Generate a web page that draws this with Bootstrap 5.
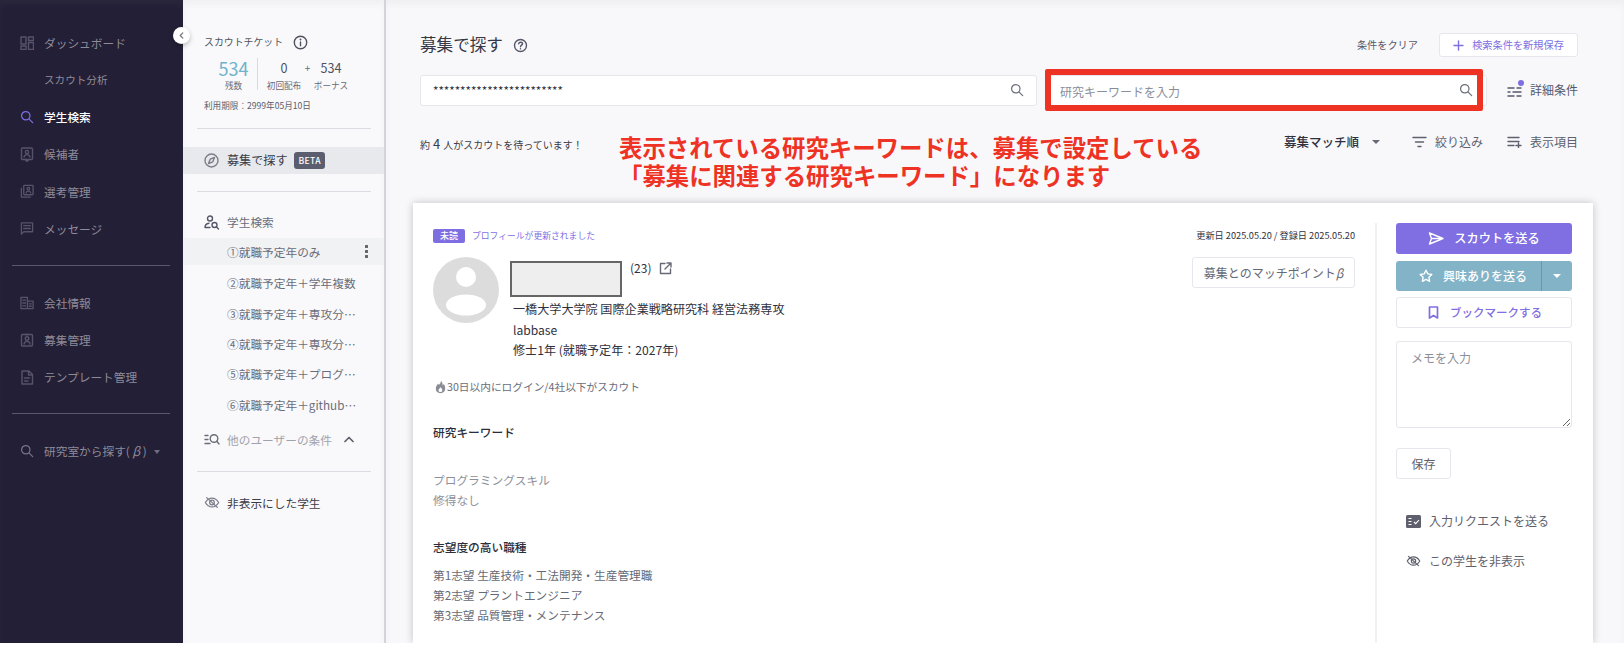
<!DOCTYPE html>
<html lang="ja">
<head>
<meta charset="utf-8">
<title>募集で探す</title>
<link href="https://cdn.jsdelivr.net/npm/bootstrap@5.3.0/dist/css/bootstrap.min.css" rel="stylesheet">
<style>
html,body{height:650px;overflow:hidden;background:#fff}
body{font-family:"Noto Sans CJK JP","Noto Sans",sans-serif;font-size:12.6px;color:#2b2d3a}
svg{display:block;flex:none}
.ic{fill:none;stroke:currentColor;stroke-width:1.4;stroke-linecap:round;stroke-linejoin:round}
.shell{height:643px;position:relative;overflow:hidden}
.rail{width:183px;background:#231f36;padding-top:24px;flex:none;box-shadow:inset 0 5px 6px rgba(255,255,255,.03)}
.rail-item{height:37.2px;padding-left:20px;gap:10px;color:#8e8b99;font-size:11.7px}
.rail-item svg{color:#57536b}
.rail-item.on{color:#fff;font-weight:500}
.rail-item.on svg{color:#7d6fe2}
.rail-item.sub{padding-left:44px;font-size:10.6px}
.rail-item.lab svg{color:#77748a}
.rail-item.lab i{margin:0 2.5px;font-size:12.5px}
.rail-caret{width:0;height:0;border:3.5px solid transparent;border-top:4px solid #6f6c7f;margin:4px 0 0 -3px}
.rail-rule{height:1px;background:#5b586b;margin:18px 13px 18px 12px;opacity:1}
.rail-rule.b{margin-bottom:19px;margin-top:17px}
.side{width:203px;flex:none;background:#f9f9fb;border-right:2px solid #d3d4d9;padding-top:32px;box-shadow:inset 0 5px 6px rgba(0,0,0,.035)}
.collapse-dot{position:absolute;left:173px;top:27px;width:17px;height:17px;border-radius:50%;background:#fff;box-shadow:0 2px 5px rgba(0,0,0,.25);color:#777;z-index:3}
.tk-head{height:20px;padding-left:21px;gap:10px;font-size:9.9px;color:#50535f}
.tk-row{height:32px;margin:6px 0 0 0;padding-left:29px}
.tk-cell{text-align:center;line-height:1}
.tk-num{font-size:12.6px;line-height:20px;color:#50535f;height:20px}
.tk-big{font-size:18px;line-height:20px;color:#6fb2c9;height:20px}
.tk-lab{font-size:8.6px;color:#666a76;margin-top:3px}
.tk-one{width:43px}
.tk-two{width:36px}
.tk-plus{width:11px;font-size:10px;line-height:20px;color:#666a76}
.tk-sep{width:1px;background:#d9dae0;height:32px;margin:0 8px 0 2px}
.tk-date{font-size:8.6px;color:#5b5e6a;padding-left:21px;margin-top:7px;height:16px;line-height:16px}
.side-rule{height:1px;background:#dcdde2;margin:0 13px 0 14px}
.side-rule.r1{margin-top:15px}
.side-rule.r2{margin-top:22px}
.side-active{height:27px;background:#e8e9ec;padding-left:21px;gap:8px;margin:18px 0 17px;font-size:12.1px;color:#3a3c49}
.side-active svg{color:#7b7e8a}
.beta{background:#5a5e6f;font-size:8.6px;font-weight:500;letter-spacing:.3px;padding:0 4px;height:17px;line-height:17px;border-radius:3px;margin-left:-1px}
.side-title{height:20px;padding-left:21px;gap:7px;margin-top:20px;font-size:11.7px;color:#6a6d79}
.side-title svg{color:#55586a}
.saved{height:30.3px;padding:0 6px 0 44px;font-size:11.7px;color:#6a6d79}
.saved span{white-space:nowrap;overflow:hidden;text-overflow:ellipsis}
.saved.on{height:27px;background:#f1f2f4;margin:6px 0 3px}
.kebab{width:3px;height:13px;margin-left:auto;margin-right:10px;flex:none;background:radial-gradient(circle at 1.5px 1.5px,#666 1.4px,transparent 1.6px) 0 0/3px 5px repeat-y}
.other{height:20px;padding-left:21px;gap:7px;margin-top:10px;font-size:11.7px;color:#a0a2ab}
.other svg{color:#6a6d79}
.other .up{color:#5e616d;margin-left:5px;stroke-width:1.7}
.hidden-row{height:20px;padding-left:21px;gap:7px;margin-top:20px;font-size:11.7px;color:#3a3c49}
.hidden-row svg{color:#7b7e8a}
.main{flex:1;background:#f8f8fb;padding:33px 46px 0 34px;min-width:0;box-shadow:inset 0 5px 6px rgba(0,0,0,.035)}
.title-row{height:24px}
.page-title{font-size:16.6px;color:#363845;font-weight:400;margin:0 10px 0 0}
.help{color:#55586a}
.clear-link{font-size:10.2px;color:#55586a;margin-right:21px}
.save-btn{height:24px;width:139px;padding:0;background:#fff;border:1px solid #e6e7ec;border-radius:3px;font-size:10.2px;color:#7d6fe2;gap:8px}
.search-row{height:31px;margin-top:17.5px;gap:8px}
.sbox{position:relative;height:31px;background:#fff;border:1px solid #e6e7ec;border-radius:3px}
.sbox.a{width:617px;flex:none}
.sbox.b{width:442px;flex:none}
.sbox .form-control{height:29px;border:0;background:transparent;box-shadow:none;font-size:11.6px;color:#2b2d3a;padding:0 0 0 12px}
.sbox.b .form-control{padding:2px 0 0 14px;font-size:12px}
.sbox .form-control::placeholder{color:#8b8e99}
.sbox svg{position:absolute;top:7px;right:12px;color:#6c6f7b;z-index:1}
.sbox.b svg{right:13px}
.red-frame{position:absolute;left:-1px;right:3px;top:-7px;bottom:-6px;border:6px solid #ee3224;border-radius:2px;pointer-events:none}
.more{margin-left:auto;gap:8px;font-size:12px;color:#55586a;position:relative}
.more svg{margin-top:3px}
.more i{position:absolute;left:11px;top:5px;width:6px;height:6px;border-radius:50%;background:#7d6fe2}
.tool-row{height:24px;margin-top:24.5px;position:relative}
.count{font-size:10px;color:#3a3c49;margin-top:4px}
.count b{font-size:13px;font-weight:400;margin:0 3px}
.note{position:absolute;left:199px;top:3px;font-size:23.4px;line-height:28px;font-weight:700;color:#ee3224;white-space:nowrap;margin:0}
.tool{gap:8px;font-size:12px;color:#5e616d}
.sort{color:#2f313e;font-size:12.5px;gap:13px;margin-right:32px;margin-left:auto;font-weight:500}
.sort i{width:0;height:0;border:4px solid transparent;border-top:4px solid #666a76;margin-top:4px}
.sheet{margin:49px 0 0 -7px;width:1180px;height:440px;background:#fff;box-shadow:0 0 8px rgba(0,0,0,.22);padding:20px 21px 0 20px;overflow:hidden}
.left-col{width:922px;flex:none;padding-top:6px}
.unread{background:#7d6fe2;font-size:9px;font-weight:500;height:14px;line-height:14px;padding:0 7px;border-radius:2px;margin-right:7px}
.upd{font-size:8.8px;color:#7d6fe2}
.meta{margin-left:auto;font-size:9.2px;color:#2f313e}
.prof{margin-top:14px}
.avatar{margin-right:11px}
.name-mask{width:112px;height:36px;background:#eee;border:2px solid #666;margin-top:4px}
.age{font-size:12px;margin:2px 0 0 8px;height:18px;gap:8px;color:#2f313e}
.age svg{color:#666a76}
.info{line-height:20.5px;padding-left:3px;margin-top:2px;color:#2f313e;font-size:12.1px}
.match{margin-left:auto;width:163px;height:31px;padding:0;background:#fff;border:1px solid #e6e7ec;border-radius:3px;font-size:12px;color:#666a76;white-space:nowrap}
.hot{margin-top:18.5px;height:16px;padding-left:2px;font-size:10.7px;color:#6a6d79}
.kw{font-size:11.7px;font-weight:500;color:#2b2d3a;height:18px;line-height:18px}
.kw.k1{margin-top:27.5px}
.kw.k2{margin-top:28px}
.dim{font-size:11.7px;line-height:20px;color:#8d9099}
.dim.d1{margin-top:29px}
.gray{font-size:11.7px;line-height:20px;color:#666a76}
.gray.g1{margin-top:9px}
.right-col{width:197px;margin-left:20px;border-left:2px solid #f1f1f3;padding-left:19px;flex:none;height:520px}
.b-scout{height:31px;width:176px;padding:0;background:#7f6fe2;border:0;border-radius:3px;color:#fff;font-size:12.2px;font-weight:500;gap:10px}
.b-int{height:30px;width:176px;margin-top:7px;border-radius:3px;overflow:hidden}
.b-int .btn{background:#83b3c7;border:0;border-radius:0;color:#fff;font-size:12px;font-weight:500;padding:0;gap:10px}
.b-int .first{flex:1;border-right:1px solid #6c97aa;padding-left:9px}
.b-int .second{width:30px;flex:none}
.b-int i{width:0;height:0;border:4px solid transparent;border-top:4px solid #fff;margin-top:4px}
.b-book{height:31px;width:176px;margin-top:6px;padding:0 0 0 2px;background:#fff;border:1px solid #e6e7ec;border-radius:3px;color:#7f6fe2;font-size:11.5px;font-weight:500;gap:11px}
.memo{width:176px;height:87px;margin-top:13px;border:1px solid #e6e7ec;border-radius:3px;font-size:12px;padding:7px 14px;box-shadow:none}
.memo::placeholder{color:#8d9099}
.b-save{width:55px;height:31px;margin-top:20px;padding:0;background:#fff;border:1px solid #e6e7ec;border-radius:3px;font-size:12px;color:#5e616d}
.act{height:20px;padding-left:10px;gap:8px;font-size:12px;color:#5e616d}
.act svg{color:#5e616d}
.act.a1{margin-top:32px}
.act.a2{margin-top:20px}
.flame{color:#8a8d96;margin-right:1px}
</style>
</head>
<body>
<svg width="0" height="0" style="position:absolute">
  <symbol id="i-search" viewBox="0 0 16 16"><circle cx="6.6" cy="6.6" r="4.8"/><path d="M10.2 10.2 14.5 14.5"/></symbol>
  <symbol id="i-eyeoff" viewBox="0 0 18 16"><path d="M1.5 8C3.5 4.6 6 3 9 3s5.5 1.6 7.500 5c-2 3.400-4.500 5-7.500 5S3.500 11.400 1.500 8Z"/><circle cx="9" cy="8" r="2.600"/><path d="M3 2.500 15 13.500"/></symbol>
</svg>
<div class="shell d-flex">
  <div class="collapse-dot d-flex align-items-center justify-content-center"><svg class="ic" width="7" height="7" viewBox="0 0 8 8"><path d="M5.500 1 2.500 4l3 3"/></svg></div>

  <nav class="rail">
    <div class="rail-item d-flex align-items-center"><svg class="ic" width="14" height="14" viewBox="0 0 14 14"><rect x="1" y="1" width="5" height="7"/><rect x="8.500" y="1" width="5" height="3.500"/><rect x="1" y="10" width="5" height="3.500"/><rect x="8.500" y="6.500" width="5" height="7"/></svg><span>ダッシュボード</span></div>
    <div class="rail-item sub d-flex align-items-center"><span>スカウト分析</span></div>
    <div class="rail-item on d-flex align-items-center"><svg class="ic" width="14" height="14"><use href="#i-search"/></svg><span>学生検索</span></div>
    <div class="rail-item d-flex align-items-center"><svg class="ic" width="14" height="15" viewBox="0 0 14 15"><rect x="1.500" y="1" width="11" height="11.500" rx="1"/><circle cx="7" cy="5" r="1.600"/><path d="M4 10c.5-1.800 1.500-2.400 3-2.400s2.500.6 3 2.400M5 12.500 7 14.500l2-2"/></svg><span>候補者</span></div>
    <div class="rail-item d-flex align-items-center"><svg class="ic" width="14" height="15" viewBox="0 0 15 15"><rect x="4" y="1" width="10" height="10" rx=".8"/><path d="M1.500 4v9.500H11"/><circle cx="9" cy="4.500" r="1.400"/><path d="M6.500 9c.4-1.400 1.300-2 2.500-2s2.100.6 2.500 2"/></svg><span>選考管理</span></div>
    <div class="rail-item d-flex align-items-center"><svg class="ic" width="14" height="15" viewBox="0 0 15 15"><path d="M1.500 1.500h12v9.500H4l-2.500 2.500Z"/><path d="M4 4.500h7M4 7.500h7"/></svg><span>メッセージ</span></div>
    <div class="rail-rule"></div>
    <div class="rail-item d-flex align-items-center"><svg class="ic" width="14" height="14" viewBox="0 0 15 14"><path d="M1 13V1h7v12M8 5h6v8H1M3 4h3M3 7h3M3 10h3M10 8h2M10 10.500h2"/></svg><span>会社情報</span></div>
    <div class="rail-item d-flex align-items-center"><svg class="ic" width="14" height="14" viewBox="0 0 14 14"><rect x="1.500" y="1.500" width="11" height="11.500" rx="1"/><circle cx="7" cy="5.500" r="1.800"/><path d="M4 11c.4-1.800 1.500-2.600 3-2.600s2.600.8 3 2.600M5.500 1.500h3"/></svg><span>募集管理</span></div>
    <div class="rail-item d-flex align-items-center"><svg class="ic" width="14" height="15" viewBox="0 0 14 15"><path d="M2 1h7l3.500 3.500V14H2ZM8.500 1v4h4M4.500 8h5M4.500 11h3.500"/></svg><span>テンプレート管理</span></div>
    <div class="rail-rule b"></div>
    <div class="rail-item lab d-flex align-items-center"><svg class="ic" width="14" height="14"><use href="#i-search"/></svg><span>研究室から探す(<i>β</i>)</span><span class="rail-caret"></span></div>
  </nav>

  <aside class="side">
    <div class="tk-head d-flex align-items-center"><span>スカウトチケット</span><svg class="ic" width="15" height="15" viewBox="0 0 15 15"><circle cx="7.500" cy="7.500" r="6.200"/><path d="M7.500 7v3.800"/><path d="M7.500 4.300v.3" stroke-width="1.800"/></svg></div>
    <div class="tk-row d-flex">
      <div class="tk-cell tk-one"><div class="tk-big">534</div><div class="tk-lab">残数</div></div>
      <div class="tk-sep"></div>
      <div class="tk-cell tk-two"><div class="tk-num">0</div><div class="tk-lab">初回配布</div></div>
      <div class="tk-cell tk-plus">+</div>
      <div class="tk-cell tk-two"><div class="tk-num">534</div><div class="tk-lab">ボーナス</div></div>
    </div>
    <div class="tk-date">利用期限：2999年05月10日</div>
    <div class="side-rule r1"></div>
    <div class="side-active d-flex align-items-center"><svg class="ic" width="15" height="15" viewBox="0 0 15 15"><circle cx="7.500" cy="7.500" r="6.500"/><path d="M10.500 4.500 8.800 8.800 4.500 10.500 6.200 6.200Z"/></svg><span>募集で探す</span><span class="badge beta">BETA</span></div>
    <div class="side-rule"></div>
    <div class="side-title d-flex align-items-center"><svg class="ic" width="16" height="15" viewBox="0 0 16 15"><circle cx="6" cy="3.500" r="2.500"/><path d="M1 12.500c0-2.500 1.500-4 4-4.300M1 12.500h5"/><circle cx="10.500" cy="10" r="2.500"/><path d="M12.500 12 14.500 14"/></svg><span>学生検索</span></div>
    <div class="saved on d-flex align-items-center"><span>①就職予定年のみ</span><i class="kebab"></i></div>
    <div class="saved d-flex align-items-center"><span>②就職予定年＋学年複数</span></div>
    <div class="saved d-flex align-items-center"><span>③就職予定年＋専攻分…</span></div>
    <div class="saved d-flex align-items-center"><span>④就職予定年＋専攻分…</span></div>
    <div class="saved d-flex align-items-center"><span>⑤就職予定年＋プログ…</span></div>
    <div class="saved d-flex align-items-center"><span>⑥就職予定年＋github…</span></div>
    <div class="other d-flex align-items-center"><svg class="ic" width="16" height="13" viewBox="0 0 16 13"><path d="M1 2.500h3M1 6.500h3M1 10.500h5"/><circle cx="10" cy="5.500" r="3.800"/><path d="M12.800 8.300 15 11"/></svg><span>他のユーザーの条件</span><svg class="ic up" width="10" height="7" viewBox="0 0 10 7"><path d="M1 5.500 5 1.500l4 4"/></svg></div>
    <div class="side-rule r2"></div>
    <div class="hidden-row d-flex align-items-center"><svg class="ic" width="16" height="15"><use href="#i-eyeoff"/></svg><span>非表示にした学生</span></div>
  </aside>

  <main class="main">
    <div class="title-row d-flex align-items-center">
      <h1 class="page-title">募集で探す</h1>
      <svg class="ic help" width="15" height="15" viewBox="0 0 15 15"><circle cx="7.500" cy="7.500" r="6"/><path d="M5.600 5.800c.2-1 1-1.500 2-1.500s1.900.6 1.900 1.600c0 1.300-2 1.300-2 2.800M7.500 10.600v.3"/></svg>
      <span class="clear-link ms-auto">条件をクリア</span>
      <button class="btn save-btn d-flex align-items-center justify-content-center" type="button"><svg class="ic" width="11" height="11" viewBox="0 0 11 11"><path d="M5.500 1v9M1 5.500h9"/></svg><span>検索条件を新規保存</span></button>
    </div>

    <div class="search-row d-flex">
      <div class="sbox a"><input class="form-control" type="text" value="************************" aria-label="キーワード"><svg class="ic" width="14" height="14"><use href="#i-search"/></svg></div>
      <div class="sbox b"><input class="form-control" type="text" placeholder="研究キーワードを入力" aria-label="研究キーワード"><svg class="ic" width="14" height="14"><use href="#i-search"/></svg><div class="red-frame"></div></div>
      <div class="more d-flex align-items-center"><svg class="ic" width="15" height="12" viewBox="0 0 15 12"><path d="M1 2h6M10 2h4M1 6h2M6 6h8M1 10h6M10 10h4"/></svg><i></i><span>詳細条件</span></div>
    </div>

    <div class="tool-row d-flex align-items-center">
      <div class="count">約<b>4</b>人がスカウトを待っています！</div>
      <p class="note">表示されている研究キーワードは、募集で設定している<br>「募集に関連する研究キーワード」になります</p>
      <div class="sort d-flex align-items-center"><span>募集マッチ順</span><i></i></div>
      <div class="tool d-flex align-items-center me-4"><svg class="ic" width="15" height="12" viewBox="0 0 15 12"><path d="M1 1.500h13M3.500 6h8M6 10.500h3"/></svg><span>絞り込み</span></div>
      <div class="tool d-flex align-items-center"><svg class="ic" width="15" height="12" viewBox="0 0 15 12"><path d="M1 1.500h11M1 5.500h11M1 9.500h6M11.500 7v4.800M9 9.500h5"/></svg><span>表示項目</span></div>
    </div>

    <section class="sheet d-flex">
      <div class="left-col">
        <div class="d-flex align-items-center"><span class="badge unread">未読</span><span class="upd">プロフィールが更新されました</span><span class="meta">更新日 2025.05.20 / 登録日 2025.05.20</span></div>
        <div class="prof d-flex">
          <svg class="avatar" width="66" height="66" viewBox="0 0 66 66"><circle cx="33" cy="33" r="33" fill="#dcdcdc"/><circle cx="33" cy="20" r="10" fill="#fff"/><ellipse cx="33" cy="48" rx="20" ry="10.500" fill="#fff"/></svg>
          <div>
            <div class="d-flex"><div class="name-mask"></div><div class="age d-flex align-items-center"><span>(23)</span><svg class="ic" width="13" height="13" viewBox="0 0 13 13"><path d="M6 1.500H1.500v10h10V7M8 1h4v4M12 1 6 7"/></svg></div></div>
            <div class="info">一橋大学大学院 国際企業戦略研究科 経営法務専攻<br>labbase<br>修士1年 (就職予定年：2027年)</div>
          </div>
          <button class="btn match" type="button">募集とのマッチポイント<i>β</i></button>
        </div>
        <div class="hot d-flex align-items-center"><svg class="flame" width="11" height="14" viewBox="0 0 11 14"><path fill="currentColor" d="M5.800.800c.5 2-1 3-1.800 4.200-.3-.6-.5-1-.9-1.300C1.800 5.100.800 6.700.800 8.500c0 2.800 2 4.700 4.700 4.700s4.700-1.900 4.700-4.700c0-2.200-.7-3.400-1.500-4.700-.2.800-.5 1.300-1 1.700C7.600 3.500 7.300 1.800 5.800.800Z"/><path fill="#fff" d="M5.500 7c.3 1 1.800 1.600 1.800 3.200a1.900 1.900 0 0 1-3.800 0C3.500 9 5 8.300 5.500 7Z"/></svg><span>30日以内にログイン/4社以下がスカウト</span></div>
        <div class="kw k1">研究キーワード</div>
        <div class="dim d1">プログラミングスキル</div>
        <div class="dim">修得なし</div>
        <div class="kw k2">志望度の高い職種</div>
        <div class="gray g1">第1志望 生産技術・工法開発・生産管理職</div>
        <div class="gray">第2志望 プラントエンジニア</div>
        <div class="gray">第3志望 品質管理・メンテナンス</div>
      </div>
      <div class="right-col">
        <button class="btn b-scout d-flex align-items-center justify-content-center" type="button"><svg class="ic" width="16" height="13" viewBox="0 0 16 13"><path d="M1.500 1 15 6.500 1.500 12 3.500 6.500ZM3.500 6.500H15"/></svg><span>スカウトを送る</span></button>
        <div class="b-int d-flex"><button class="btn first d-flex align-items-center justify-content-center" type="button"><svg class="ic" width="14" height="14" viewBox="0 0 14 14"><path d="m7 1.200 1.800 3.700 4 .6-2.900 2.800.7 4L7 10.400l-3.600 1.900.7-4L1.200 5.500l4-.6Z"/></svg><span>興味ありを送る</span></button><button class="btn second d-flex align-items-center justify-content-center" type="button" aria-label="開く"><i></i></button></div>
        <button class="btn b-book d-flex align-items-center justify-content-center" type="button"><svg class="ic" width="11" height="13" viewBox="0 0 11 13" style="stroke-width:1.700"><path d="M1.500 1h8v11l-4-2.500-4 2.500Z"/></svg><span>ブックマークする</span></button>
        <textarea class="form-control memo d-block" placeholder="メモを入力" aria-label="メモ"></textarea>
        <button class="btn b-save d-block" type="button">保存</button>
        <div class="act a1 d-flex align-items-center"><svg width="15" height="13" viewBox="0 0 15 13"><rect width="15" height="13" rx="1.500" fill="currentColor"/><path d="M2.500 3.500h3M2.500 6.500h3M2.500 9.500h3M8 7l1.700 1.700L13 5" fill="none" stroke="#fff" stroke-width="1.100"/></svg><span>入力リクエストを送る</span></div>
        <div class="act a2 d-flex align-items-center"><svg class="ic" width="15" height="14"><use href="#i-eyeoff"/></svg><span>この学生を非表示</span></div>
      </div>
    </section>
  </main>
</div>
<script src="https://cdn.jsdelivr.net/npm/bootstrap@5.3.0/dist/js/bootstrap.bundle.min.js"></script>
</body>
</html>
